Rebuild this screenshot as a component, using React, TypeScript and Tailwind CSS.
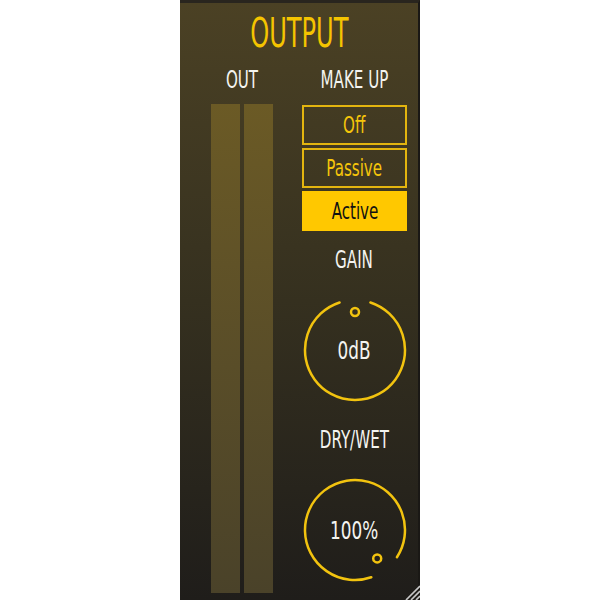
const FONT = "font-['DejaVu_Sans_Condensed','DejaVu_Sans',sans-serif]";

function Cond({ children, className = '' }: { children: string; className?: string }) {
  return <span className={`inline-block whitespace-nowrap leading-none ${className}`}>{children}</span>;
}

function Knob({ arc, dot, label }: { arc: string; dot: [number, number]; label: string }) {
  return (
    <div className="relative w-[104px] h-[104px] flex items-center justify-center">
      <svg width="104" height="104" viewBox="0 0 104 104" className="absolute inset-0">
        <path d={arc} fill="none" stroke="#f2c30f" strokeWidth="2.5" strokeLinecap="round" />
        <circle cx={dot[0]} cy={dot[1]} r="4" fill="none" stroke="#f2c30f" strokeWidth="2.5" />
      </svg>
      <Cond className="relative text-[25px] scale-x-[0.75] text-[#f4f4f0]">{label}</Cond>
    </div>
  );
}

const MODES = ['Off', 'Passive', 'Active'];

export default function App() {
  const active = 'Active';
  return (
    <div className={`w-[600px] h-[600px] bg-white ${FONT}`}>
      <div className="relative ml-[180px] w-[240px] h-[600px] border-t-[3px] border-t-[#29251e] border-r-2 border-r-[#1a1815] bg-gradient-to-b from-[#4b4124] via-[#35301f] to-[#1f1d1a]">
        <div className="h-[59px] flex items-center justify-center">
          <Cond className="text-[40px] scale-x-[0.67] text-[#f5c400]">OUTPUT</Cond>
        </div>
        <div className="flex">
          {/* meters */}
          <div className="w-[120px] pl-[31px]">
            <div className="w-[62px] h-[36px] flex items-center justify-center">
              <Cond className="text-[24px] scale-x-[0.7] text-[#f4f4f0]">OUT</Cond>
            </div>
            <div className="mt-[6px] flex gap-[4px] h-[489px]">
              <div className="w-[29px] bg-gradient-to-b from-[#6b5a25] to-[#4a4229]" />
              <div className="w-[29px] bg-gradient-to-b from-[#6b5a25] to-[#4a4229]" />
            </div>
          </div>
          {/* controls */}
          <div className="ml-[2px] w-[105px] flex flex-col items-center">
            <div className="h-[36px] flex items-center justify-center">
              <Cond className="text-[24px] scale-x-[0.7] text-[#f4f4f0]">MAKE UP</Cond>
            </div>
            <div className="mt-[7px] w-full flex flex-col gap-[3px]">
              {MODES.map((m) =>
                m === active ? (
                  <div key={m} className="h-[40px] bg-[#ffc800] flex items-center justify-center">
                    <Cond className="text-[23px] scale-x-[0.73] text-[#111]">{m}</Cond>
                  </div>
                ) : (
                  <div key={m} className="h-[40px] border-2 border-[#e3b50f] flex items-center justify-center">
                    <Cond className="text-[23px] scale-x-[0.73] text-[#f5c50a]">{m}</Cond>
                  </div>
                )
              )}
            </div>
            <div className="h-[58px] flex items-center justify-center">
              <Cond className="text-[24px] scale-x-[0.7] text-[#f4f4f0]">GAIN</Cond>
            </div>
            <div className="mt-[9px]">
              <Knob arc="M 67.45 4.45 A 50 50 0 1 1 36.55 4.45" dot={[52, 14]} label="0dB" />
            </div>
            <div className="h-[76px] flex items-center justify-center">
              <Cond className="text-[24px] scale-x-[0.7] text-[#f4f4f0]">DRY/WET</Cond>
            </div>
            <Knob arc="M 68.28 99.28 A 50 50 0 1 1 93.93 79.23" dot={[74.2, 80.4]} label="100%" />
          </div>
        </div>
        <svg width="18" height="18" viewBox="0 0 18 18" className="absolute right-[-2px] bottom-0">
          <path d="M4 18 L18 4 M9 18 L18 9 M14 18 L18 14" stroke="#c8c8c8" strokeWidth="1.6" />
        </svg>
      </div>
    </div>
  );
}
